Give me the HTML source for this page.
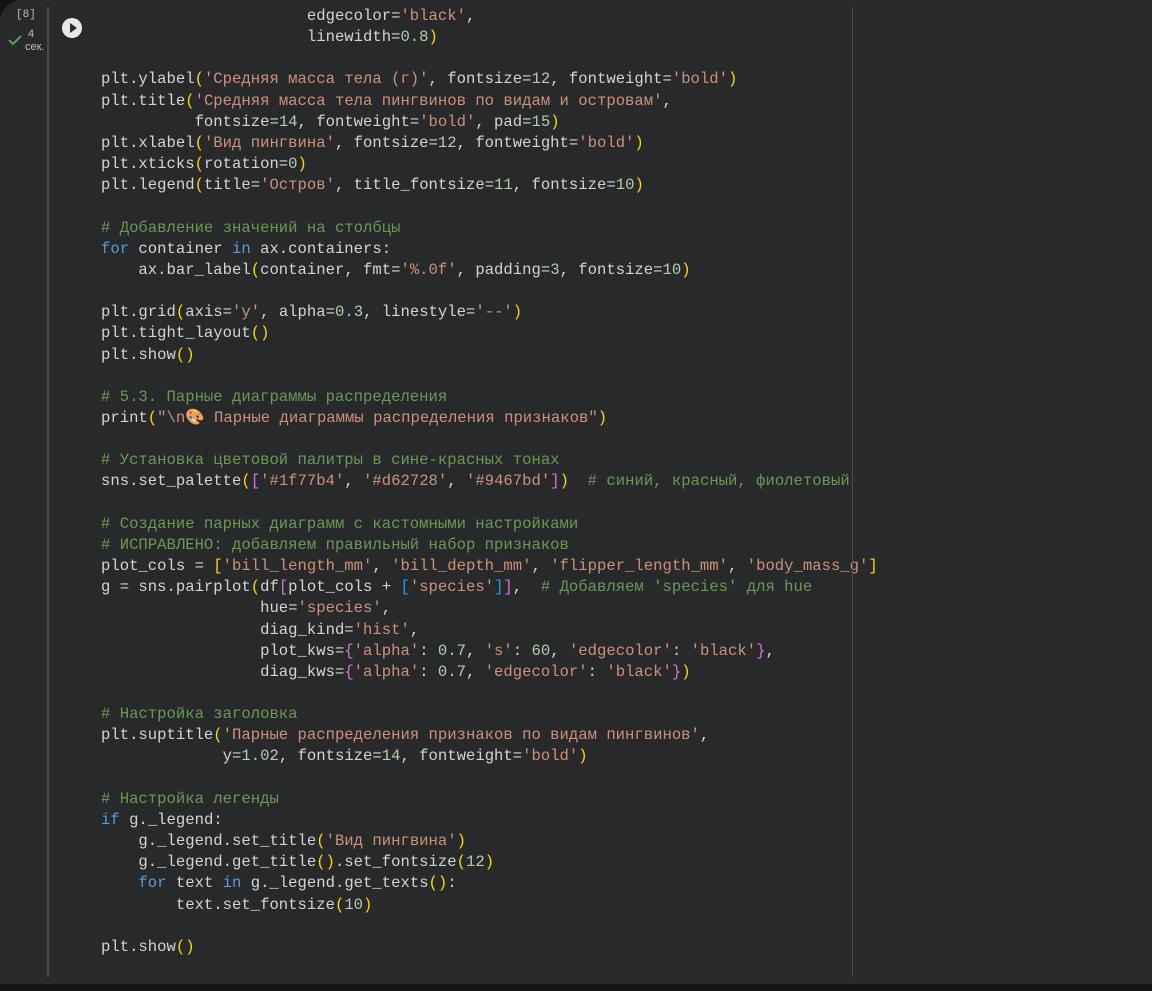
<!DOCTYPE html>
<html><head><meta charset="utf-8"><style>
html,body{margin:0;padding:0;background:#141414;width:1152px;height:991px;overflow:hidden}
.panel{position:absolute;left:0;top:0;width:1152px;height:984px;background:#28292b;border-top-left-radius:22px}
.gut{position:absolute;left:47px;top:7px;width:2px;height:970px;background:#4a4b4d}
.ruler{position:absolute;left:852px;top:7px;width:1px;height:970px;background:#4a4b4d;z-index:2}
.num{position:absolute;left:16px;top:9px;font:11px "Liberation Mono",monospace;color:#bbb}
.chk{position:absolute;left:8px;top:34px}
.sec{position:absolute;left:25px;top:28px;font:11px/13px "Liberation Sans",sans-serif;color:#bbb}
.play{position:absolute;left:62px;top:18px;width:20px;height:20px;border-radius:50%;background:#e8e8e8}
.play:after{content:"";position:absolute;left:8px;top:5px;border-left:7px solid #28292b;border-top:5px solid transparent;border-bottom:5px solid transparent}
pre{position:absolute;left:101px;top:6px;margin:0;font:15.6px/21.16px "Liberation Mono","DejaVu Sans Mono","Noto Sans CJK SC",monospace;color:#d4d4d4;white-space:pre}
.s{color:#ce9178}.n{color:#b5cea8}.k{color:#569cd6}.c{color:#6a9955}.y{color:#ffd700}.p{color:#da70d6}.b{color:#179fff}
</style></head><body>
<div class="panel"></div>
<div class="gut"></div>
<div class="num">[8]</div>
<svg class="chk" width="14" height="12" viewBox="0 0 14 12"><path d="M1 6 L5 10 L13 2" stroke="#5cb85c" stroke-width="1.6" fill="none"/></svg>
<div class="sec">&nbsp;4<br>сек.</div>
<div class="play"></div>
<div class="ruler"></div>
<pre>                      edgecolor=<span class="s">'black'</span>,
                      linewidth=<span class="n">0.8</span><span class="y">)</span>

plt.ylabel<span class="y">(</span><span class="s">'Средняя масса тела (г)'</span>, fontsize=<span class="n">12</span>, fontweight=<span class="s">'bold'</span><span class="y">)</span>
plt.title<span class="y">(</span><span class="s">'Средняя масса тела пингвинов по видам и островам'</span>,
          fontsize=<span class="n">14</span>, fontweight=<span class="s">'bold'</span>, pad=<span class="n">15</span><span class="y">)</span>
plt.xlabel<span class="y">(</span><span class="s">'Вид пингвина'</span>, fontsize=<span class="n">12</span>, fontweight=<span class="s">'bold'</span><span class="y">)</span>
plt.xticks<span class="y">(</span>rotation=<span class="n">0</span><span class="y">)</span>
plt.legend<span class="y">(</span>title=<span class="s">'Остров'</span>, title_fontsize=<span class="n">11</span>, fontsize=<span class="n">10</span><span class="y">)</span>

<span class="c"># Добавление значений на столбцы</span>
<span class="k">for</span> container <span class="k">in</span> ax.containers:
    ax.bar_label<span class="y">(</span>container, fmt=<span class="s">'%.0f'</span>, padding=<span class="n">3</span>, fontsize=<span class="n">10</span><span class="y">)</span>

plt.grid<span class="y">(</span>axis=<span class="s">'y'</span>, alpha=<span class="n">0.3</span>, linestyle=<span class="s">'--'</span><span class="y">)</span>
plt.tight_layout<span class="y">()</span>
plt.show<span class="y">()</span>

<span class="c"># 5.3. Парные диаграммы распределения</span>
print<span class="y">(</span><span class="s">"\n🎨 Парные диаграммы распределения признаков"</span><span class="y">)</span>

<span class="c"># Установка цветовой палитры в сине-красных тонах</span>
sns.set_palette<span class="y">(</span><span class="p">[</span><span class="s">'#1f77b4'</span>, <span class="s">'#d62728'</span>, <span class="s">'#9467bd'</span><span class="p">]</span><span class="y">)</span>  <span class="c"># синий, красный, фиолетовый</span>

<span class="c"># Создание парных диаграмм с кастомными настройками</span>
<span class="c"># ИСПРАВЛЕНО: добавляем правильный набор признаков</span>
plot_cols = <span class="y">[</span><span class="s">'bill_length_mm'</span>, <span class="s">'bill_depth_mm'</span>, <span class="s">'flipper_length_mm'</span>, <span class="s">'body_mass_g'</span><span class="y">]</span>
g = sns.pairplot<span class="y">(</span>df<span class="p">[</span>plot_cols + <span class="b">[</span><span class="s">'species'</span><span class="b">]</span><span class="p">]</span>,  <span class="c"># Добавляем 'species' для hue</span>
                 hue=<span class="s">'species'</span>,
                 diag_kind=<span class="s">'hist'</span>,
                 plot_kws=<span class="p">{</span><span class="s">'alpha'</span>: <span class="n">0.7</span>, <span class="s">'s'</span>: <span class="n">60</span>, <span class="s">'edgecolor'</span>: <span class="s">'black'</span><span class="p">}</span>,
                 diag_kws=<span class="p">{</span><span class="s">'alpha'</span>: <span class="n">0.7</span>, <span class="s">'edgecolor'</span>: <span class="s">'black'</span><span class="p">}</span><span class="y">)</span>

<span class="c"># Настройка заголовка</span>
plt.suptitle<span class="y">(</span><span class="s">'Парные распределения признаков по видам пингвинов'</span>,
             y=<span class="n">1.02</span>, fontsize=<span class="n">14</span>, fontweight=<span class="s">'bold'</span><span class="y">)</span>

<span class="c"># Настройка легенды</span>
<span class="k">if</span> g._legend:
    g._legend.set_title<span class="y">(</span><span class="s">'Вид пингвина'</span><span class="y">)</span>
    g._legend.get_title<span class="y">()</span>.set_fontsize<span class="y">(</span><span class="n">12</span><span class="y">)</span>
    <span class="k">for</span> text <span class="k">in</span> g._legend.get_texts<span class="y">()</span>:
        text.set_fontsize<span class="y">(</span><span class="n">10</span><span class="y">)</span>

plt.show<span class="y">()</span></pre>
</body></html>
